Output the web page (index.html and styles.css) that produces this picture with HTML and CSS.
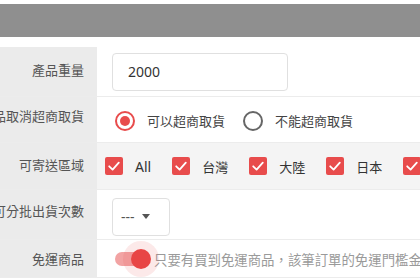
FILE: index.html
```html
<!DOCTYPE html>
<html>
<head>
<meta charset="utf-8">
<link rel="stylesheet" href="styles.css">
</head>
<body>
<div class="topbar"></div>
<div class="form">
  <div class="row row-1">
    <div class="label"><span>產品重量</span></div>
    <div class="field">
      <div class="input">2000</div>
    </div>
  </div>
  <div class="row row-2">
    <div class="label"><span>商品取消超商取貨</span></div>
    <div class="field radios">
      <span class="radio on"></span><span class="opt">可以超商取貨</span>
      <span class="radio"></span><span class="opt">不能超商取貨</span>
    </div>
  </div>
  <div class="row row-3">
    <div class="label"><span>可寄送區域</span></div>
    <div class="field checks">
      <span class="check"><svg viewBox="0 0 18 18" width="18" height="18"><path d="M4.2 9.3 L7.6 12.6 L13.8 5.6" fill="none" stroke="#fff" stroke-width="1.8" stroke-linecap="round" stroke-linejoin="round"/></svg></span><span class="copt latin">All</span>
      <span class="check"><svg viewBox="0 0 18 18" width="18" height="18"><path d="M4.2 9.3 L7.6 12.6 L13.8 5.6" fill="none" stroke="#fff" stroke-width="1.8" stroke-linecap="round" stroke-linejoin="round"/></svg></span><span class="copt">台灣</span>
      <span class="check"><svg viewBox="0 0 18 18" width="18" height="18"><path d="M4.2 9.3 L7.6 12.6 L13.8 5.6" fill="none" stroke="#fff" stroke-width="1.8" stroke-linecap="round" stroke-linejoin="round"/></svg></span><span class="copt">大陸</span>
      <span class="check"><svg viewBox="0 0 18 18" width="18" height="18"><path d="M4.2 9.3 L7.6 12.6 L13.8 5.6" fill="none" stroke="#fff" stroke-width="1.8" stroke-linecap="round" stroke-linejoin="round"/></svg></span><span class="copt">日本</span>
      <span class="check"><svg viewBox="0 0 18 18" width="18" height="18"><path d="M4.2 9.3 L7.6 12.6 L13.8 5.6" fill="none" stroke="#fff" stroke-width="1.8" stroke-linecap="round" stroke-linejoin="round"/></svg></span><span class="copt">美國</span>
    </div>
  </div>
  <div class="row row-4">
    <div class="label"><span>可分批出貨次數</span></div>
    <div class="field">
      <div class="select"><span class="dash">---</span><span class="caret"></span></div>
    </div>
  </div>
  <div class="row row-5">
    <div class="label"><span>免運商品</span></div>
    <div class="field toggle-field">
      <span class="toggle"><span class="track"></span><span class="halo"></span><span class="knob"></span></span>
      <span class="hint">只要有買到免運商品，該筆訂單的免運門檻金額將不列入計算</span>
    </div>
  </div>
</div>
</body>
</html>
```

FILE: styles.css
```css
html, body {
  margin: 0;
  padding: 0;
  background: #fff;
  width: 420px;
  height: 280px;
  overflow: hidden;
  font-family: "Noto Sans", "Noto Sans CJK TC", sans-serif;
  color: #333;
}

.topbar {
  margin-top: 4px;
  height: 33px;
  background: #8f8f8f;
}

.form {
  margin-top: 10px;
}

.row {
  display: flex;
  border-bottom: 1px solid #ececec;
  box-sizing: border-box;
}

.row-1 { height: 50px; }
.row-2 { height: 46px; }
.row-3 { height: 47px; }
.row-4 { height: 50px; }
.row-5 { height: 38px; }

.label {
  flex: 0 0 97px;
  width: 97px;
  background: #ebebeb;
  display: flex;
  justify-content: flex-end;
  align-items: center;
  padding-right: 13px;
  box-sizing: border-box;
  overflow: hidden;
  white-space: nowrap;
  font-size: 13px;
  line-height: 18px;
  color: #555;
}

.row-2 .label, .row-4 .label { padding-bottom: 8px; }
.row-1 .label { padding-bottom: 3px; }
.row-3 .label { padding-bottom: 2px; }

.field {
  flex: 1;
  display: flex;
  align-items: center;
  padding-left: 15px;
  white-space: nowrap;
  overflow: hidden;
  min-width: 0;
}

.input {
  width: 176px;
  height: 38px;
  box-sizing: border-box;
  border: 1px solid #e0e0e0;
  border-radius: 4px;
  padding-left: 15px;
  display: flex;
  align-items: center;
  font-size: 14px;
  color: #333;
}

.radios {
  padding-left: 18px;
  padding-top: 2px;
  font-size: 13px;
  color: #444;
}

.radio {
  width: 20px;
  height: 20px;
  box-sizing: border-box;
  border-radius: 50%;
  border: 2px solid #666;
  display: inline-flex;
  align-items: center;
  justify-content: center;
  margin-right: 12px;
  flex: none;
}

.radio.on {
  border-color: #e84c4c;
}

.radio.on::after {
  content: "";
  width: 10px;
  height: 10px;
  border-radius: 50%;
  background: #e84c4c;
}

.opt { margin-right: 18px; }

.row-3 .field {
  background: #f4f4f4;
  padding-left: 8px;
}

.checks { font-size: 13px; color: #333; }

.check {
  width: 18px;
  height: 18px;
  border-radius: 2px;
  background: #e84c4c;
  display: inline-flex;
  flex: none;
  margin-right: 12px;
}

.copt { margin-right: 21px; }
.copt.latin { font-size: 14px; }

.select {
  width: 58px;
  height: 38px;
  box-sizing: border-box;
  border: 1px solid #e0e0e0;
  border-radius: 4px;
  display: flex;
  align-items: center;
  padding-left: 8px;
  margin-top: 4px;
  font-size: 14px;
  color: #555;
}

.dash { margin-right: 7px; }

.caret {
  width: 0;
  height: 0;
  border-left: 4px solid transparent;
  border-right: 4px solid transparent;
  border-top: 5px solid #555;
}

.toggle-field {
  overflow: visible;
  padding-left: 18px;
}

.toggle {
  position: relative;
  width: 36px;
  height: 20px;
  flex: none;
  margin-right: 3px;
}

.track {
  position: absolute;
  left: 0;
  top: 3px;
  width: 34px;
  height: 14px;
  border-radius: 7px;
  background: #f2a3a3;
}

.halo {
  position: absolute;
  left: -8px;
  top: -8px;
  width: 36px;
  height: 36px;
  margin-left: 16px;
  border-radius: 50%;
  background: rgba(232, 76, 76, 0.12);
}

.knob {
  position: absolute;
  left: 16px;
  top: 0;
  width: 20px;
  height: 20px;
  border-radius: 50%;
  background: #e84545;
}

.hint {
  font-size: 13.4px;
  color: #9a9a9a;
}
```
